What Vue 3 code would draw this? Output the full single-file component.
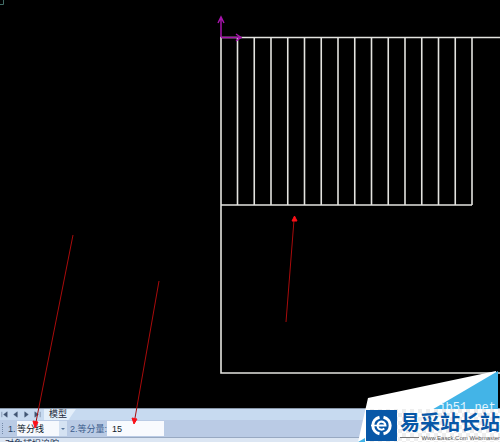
<script setup>
import { ref } from 'vue'

const columns = Array.from({ length: 15 }, (_, i) => 237.5 + i * 16.75)
const pointers = [
  { x1: 73, y1: 235, x2: 36, y2: 422, head: '35,428 33,421 38,422' },
  { x1: 159, y1: 281, x2: 135, y2: 418, head: '134,424 132,418 137,419' },
  { x1: 286, y1: 322, x2: 294, y2: 220, head: '294.500,216 292,221 297,221' },
]
const tabButtons = [
  { label: '第一个', d: 'M2 2v6M8 2v6L4 5z' },
  { label: '上一个', d: 'M7 2v6L3 5z' },
  { label: '下一个', d: 'M3 2v6l4-3z' },
  { label: '最后一个', d: 'M2 2v6l4-3zM8 2v6' },
]
const mode = ref('等分线')
const amount = ref('15')
</script>

<template>
  <main class="cad">
    <svg class="drawing" viewBox="0 0 500 442" preserveAspectRatio="xMinYMin slice" aria-hidden="true">
      <path d="M0 4.500h3.500V0" fill="none" stroke="#426e68" />
      <g fill="none" stroke="#e4e4e0" stroke-width="1.600">
        <path d="M500 37.500H221V373H500M221 205H472" />
        <path v-for="x in columns" :key="x" :d="`M${x} 37.500V205`" />
      </g>
      <g fill="none" stroke="#a714ac" stroke-width="1.500">
        <path d="M221 37V18M218 23l3-6 3 6M221 37.500H241M236 34l5 3.500-5 3.500" />
      </g>
    </svg>

    <section class="panel">
      <nav class="tabs">
        <button v-for="b in tabButtons" :key="b.label" class="step" :aria-label="b.label">
          <svg viewBox="0 0 10 10"><path :d="b.d" fill="#405573" stroke="#405573" stroke-width=".5" /></svg>
        </button>
        <button class="model">模型</button>
      </nav>
      <form class="options" @submit.prevent>
        <span class="grip"></span>
        <label class="first" for="mode">1.</label>
        <span class="choice">
          <select id="mode" v-model="mode"><option>等分线</option></select>
          <svg viewBox="0 0 6 4"><path d="M1 1h4L3 3z" fill="#57749b" /></svg>
        </span>
        <label class="second" for="amount">2.等分量:</label>
        <input id="amount" v-model="amount" type="text" />
      </form>
      <div class="status">对象捕捉追踪</div>
    </section>

    <svg class="drawing" viewBox="0 0 500 442" preserveAspectRatio="xMinYMin slice" aria-hidden="true">
      <g v-for="p in pointers" :key="p.x1">
        <line :x1="p.x1" :y1="p.y1" :x2="p.x2" :y2="p.y2" stroke="#a90b0b" />
        <polygon :points="p.head" fill="#fa1018" stroke="#fa1018" />
      </g>
    </svg>

    <aside class="watermark">
      <svg class="sheet" viewBox="0 0 142 72" preserveAspectRatio="none" aria-hidden="true">
        <path d="M10 28L138 1V72H0z" fill="#fff" />
        <path d="M60 48L140 1V48z" fill="#43b4e7" />
        <path d="M0 72L7 68V72z" fill="#43b4e7" />
      </svg>
      <span class="site">jb51.net</span>
      <div class="brand">
        <svg class="logo" viewBox="0 0 31 31" aria-hidden="true">
          <path fill="#0757a7" d="M0 0h31v31H0z" />
          <g fill="none" stroke="#fff">
            <path d="M13.500 7.200A8.500 8.500 0 0 0 13.500 23.800M17.500 7.200A8.500 8.500 0 0 1 17.500 23.800" stroke-width="3" />
            <path d="M11.500 15.500h8a4 4 0 1 0-1.200 3" stroke-width="2" />
            <path d="M5 15.500h7" stroke-width="1.500" />
          </g>
        </svg>
        <div class="words">
          <strong>易采站长站</strong>
          <small>Www.Easck.Com Webmaster</small>
        </div>
      </div>
    </aside>
  </main>
</template>

<style>
body { margin: 0; background: #000; }
</style>

<style scoped>
.cad {
  position: relative;
  display: flex;
  flex-direction: column;
  justify-content: flex-end;
  min-height: 100vh;
  overflow: hidden;
  background: #000;
  font-family: "Liberation Sans", "Noto Sans CJK SC", sans-serif;
}
.drawing { position: absolute; inset: 0; width: 100%; height: 100%; pointer-events: none; }
.panel { background: #bacbe5; border-top: 1px solid #8796a8; }
button { border: 0; padding: 0; background: none; font: inherit; }
.tabs { display: flex; height: 11px; background: #c7daf0; }
.step { width: 11px; height: 11px; display: flex; }
.step svg { width: 9px; height: 11px; }
.model {
  width: 32px;
  padding-right: 4px;
  background: #e4effa;
  clip-path: polygon(0 0, 100% 0, 76% 100%, 0 100%);
  font-size: 9px;
  line-height: 11px;
  color: #1c293b;
}
.options { display: flex; align-items: center; height: 17px; font-size: 9px; color: #273f64; }
.grip { width: 1px; height: 11px; margin: 0 4px 0 2px; border-left: 1px dotted #7389a7; }
.first { width: 9px; }
.choice { display: flex; align-items: center; width: 50px; height: 15px; background: linear-gradient(90deg, #f6f9fd 42px, #d5e2f2 42px); }
.choice svg { width: 6px; height: 4px; }
select, input {
  appearance: none;
  box-sizing: border-box;
  border: 0;
  border-radius: 0;
  margin: 0;
  padding: 0;
  height: 15px;
  font: inherit;
  color: #101b2b;
}
select { width: 43px; background: transparent; }
.second { width: 37px; padding-left: 3px; white-space: nowrap; color: #3c5c8c; }
input { width: 57px; padding-left: 5px; background: #f8fafe; }
.status { height: 4px; padding-left: 5px; overflow: hidden; border-top: 1px solid #98a9c2; background: #dce6f3; font-size: 9px; line-height: 12px; color: #203050; }
.watermark { position: absolute; right: 0; bottom: 0; width: 142px; height: 72px; }
.sheet { position: absolute; inset: 0; width: 100%; height: 100%; }
.site { position: absolute; right: 4px; top: 29px; font: 12px/18px "Liberation Mono", monospace; color: #e2f5ff; }
.brand {
  position: absolute;
  right: 0;
  bottom: 0;
  display: flex;
  align-items: center;
  width: 134px;
  height: 33px;
  background: repeating-conic-gradient(#eeeeee 0 25%, #ffffff 0 50%) 0 0 / 8px 8px;
}
.logo { width: 31px; height: 31px; flex: none; }
.words { display: flex; flex: 1; flex-direction: column; padding-left: 3px; }
strong { font: 700 20px/24px "Noto Sans CJK SC", sans-serif; color: #0757a7; white-space: nowrap; }
small { display: flex; align-items: center; gap: 2px; font-size: 6px; line-height: 8px; color: #555; white-space: nowrap; }
small::before { content: ""; flex: 1; height: 1px; background: #777; }
</style>
